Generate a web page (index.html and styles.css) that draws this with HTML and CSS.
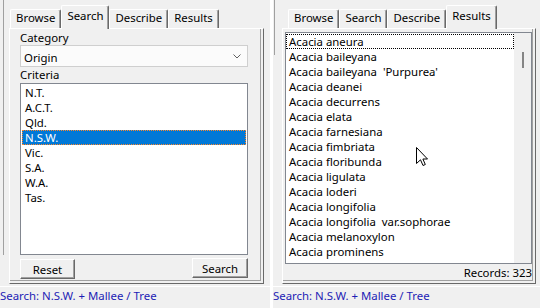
FILE: index.html
```html
<!DOCTYPE html>
<html lang="en">
<head>
  <meta charset="UTF-8">
  <title>Plant Finder</title>
  <link rel="stylesheet" href="styles.css">
</head>
<body>

  <div class="screen">

    <div class="pane pane-left">
      <div class="tabs">
        <div class="tab">Browse</div>
        <div class="tab active">Search</div>
        <div class="tab">Describe</div>
        <div class="tab">Results</div>
      </div>
      <div class="panel">
        <div class="label">Category</div>
        <div class="combo">
          <span class="combo-text">Origin</span>
          <svg class="chevron" width="8" height="5" viewBox="0 0 8 5"><polyline points="0.5,0.5 4,4 7.5,0.5" fill="none" stroke="#606060" stroke-width="1"/></svg>
        </div>
        <div class="label">Criteria</div>
        <ul class="list criteria">
          <li>N.T.</li>
          <li>A.C.T.</li>
          <li>Qld.</li>
          <li class="selected">N.S.W.</li>
          <li>Vic.</li>
          <li>S.A.</li>
          <li>W.A.</li>
          <li>Tas.</li>
        </ul>
        <div class="buttons">
          <button class="btn">Reset</button>
          <button class="btn">Search</button>
        </div>
      </div>
      <div class="status">Search: N.S.W. + Mallee / Tree</div>
    </div>

    <div class="divider"></div>

    <div class="pane pane-right">
      <div class="tabs">
        <div class="tab">Browse</div>
        <div class="tab">Search</div>
        <div class="tab">Describe</div>
        <div class="tab active">Results</div>
      </div>
      <div class="panel">
        <div class="list results">
          <ul class="rows">
            <li class="focused">Acacia aneura</li>
            <li>Acacia baileyana</li>
            <li>Acacia baileyana  'Purpurea'</li>
            <li>Acacia deanei</li>
            <li>Acacia decurrens</li>
            <li>Acacia elata</li>
            <li>Acacia farnesiana</li>
            <li>Acacia fimbriata</li>
            <li>Acacia floribunda</li>
            <li>Acacia ligulata</li>
            <li>Acacia loderi</li>
            <li>Acacia longifolia</li>
            <li>Acacia longifolia  var.sophorae</li>
            <li>Acacia melanoxylon</li>
            <li>Acacia prominens</li>
          </ul>
          <div class="scroll"><div class="thumb"></div></div>
        </div>
        <div class="records">Records: 323</div>
      </div>
      <div class="status">Search: N.S.W. + Mallee / Tree</div>
    </div>

    <!-- mouse pointer over the results list -->
    <svg class="cursor" width="13" height="20" viewBox="0 0 13 20">
      <path d="M0.5,0.5 L0.5,16.5 L4.5,12.8 L7,18.5 L9.3,17.5 L6.9,12 L11.5,12 Z" fill="#fff" stroke="#000" stroke-width="1" stroke-linejoin="miter"/>
    </svg>

  </div>

</body>
</html>
```

FILE: styles.css
```css
body {
  margin: 0;
  background-color: #f0f0f0;
  font-family: "Noto Sans", sans-serif;
  font-size: 11.4px;
  color: #000;
}

.screen {
  position: relative;
  display: flex;
  width: 540px;
  height: 308px;
  overflow: hidden;
}

.pane {
  flex: none;
  width: 270px;
  display: flex;
  flex-direction: column;
}

.pane-left {
  background: linear-gradient(#a0a0a0, #a0a0a0) 3px 0 / 1px 255px no-repeat;
}

.pane-right {
  width: 267px;
  background: linear-gradient(#a0a0a0, #a0a0a0) 1px 0 / 1px 55px no-repeat;
}

.divider {
  flex: none;
  width: 3px;
  background-color: #fff;
}

/* tab strip */

.tabs {
  height: 28px;
  display: flex;
  align-items: flex-end;
  padding-left: 10px;
}

.pane-right .tabs {
  padding-left: 15px;
}

.tab {
  box-sizing: border-box;
  height: 19px;
  line-height: 16px;
  padding: 0 5px;
  border: 1px solid #fff;
  border-right-color: #696969;
  border-bottom: none;
  border-radius: 2px 2px 0 0;
  box-shadow: inset -1px 0 0 #a0a0a0;
  white-space: nowrap;
}

.tab.active {
  position: relative;
  z-index: 1;
  height: 24px;
  line-height: 20px;
  margin-bottom: -1px;
  background-color: #f0f0f0;
}

/* tab page */

.panel {
  box-sizing: border-box;
  width: 255px;
  height: 256px;
  margin-left: 9px;
  padding: 1px 15px 0 10px;
  border: 1px solid #fff;
  border-right-color: #696969;
  border-bottom-color: #696969;
  box-shadow: inset -2px -2px 0 #f0f0f0, inset -3px -3px 0 #a0a0a0;
  display: flex;
  flex-direction: column;
}

.pane-right .panel {
  width: 254px;
  padding: 3px 3px 0 2px;
}

.label {
  height: 15px;
  line-height: 15px;
}

.combo {
  box-sizing: border-box;
  height: 22px;
  padding: 2px 6px 0 3px;
  border: 1px solid #cfcfcf;
  background-color: #fbfbfb;
  display: flex;
  align-items: center;
  justify-content: space-between;
  line-height: 15px;
}

.chevron {
  margin-top: -2px;
}

.list {
  box-sizing: border-box;
  margin: 0;
  padding: 1px 0 0;
  list-style: none;
  border: 1px solid #828790;
  background-color: #fff;
}

.criteria {
  height: 172px;
  margin-top: 1px;
}

.list li {
  height: 15px;
  line-height: 15px;
  padding-left: 3px;
  white-space: pre;
}

.criteria li {
  margin: 0 1px;
}

.criteria li.selected {
  background-color: #0078d7;
  color: #fff;
  outline: 1px dotted #ff8728;
  outline-offset: -1px;
}

.buttons {
  margin-top: 4px;
  display: flex;
  justify-content: space-between;
}

.btn {
  box-sizing: border-box;
  width: 55px;
  height: 20px;
  padding: 0;
  font: inherit;
  color: #000;
  background-color: #f0f0f0;
  border: 1px solid #fff;
  border-right-color: #696969;
  border-bottom-color: #696969;
  box-shadow: inset -1px -1px 0 #a0a0a0;
}

.buttons .btn:last-child {
  width: 56px;
  margin-top: -1px;
}

/* results list */

.results {
  height: 232px;
  padding: 0;
  display: flex;
}

.rows {
  flex: 1;
  margin: 0;
  padding: 1px 0 0;
  list-style: none;
}

.rows li.focused {
  outline: 1px dotted #000;
  outline-offset: -1px;
}

.scroll {
  flex: none;
  width: 17px;
  background-color: #f0f0f0;
}

.thumb {
  width: 2px;
  height: 16px;
  margin: 19px 0 0 8px;
  background-color: #858585;
}

.records {
  margin-top: 1px;
  height: 15px;
  line-height: 15px;
  text-align: right;
}

/* status line */

.status {
  margin-top: 2px;
  padding-top: 1px;
  border-top: 1px solid #fff;
  line-height: 15px;
  color: #1d1db5;
  white-space: nowrap;
}

.cursor {
  position: absolute;
  left: 416px;
  top: 147px;
}
```
